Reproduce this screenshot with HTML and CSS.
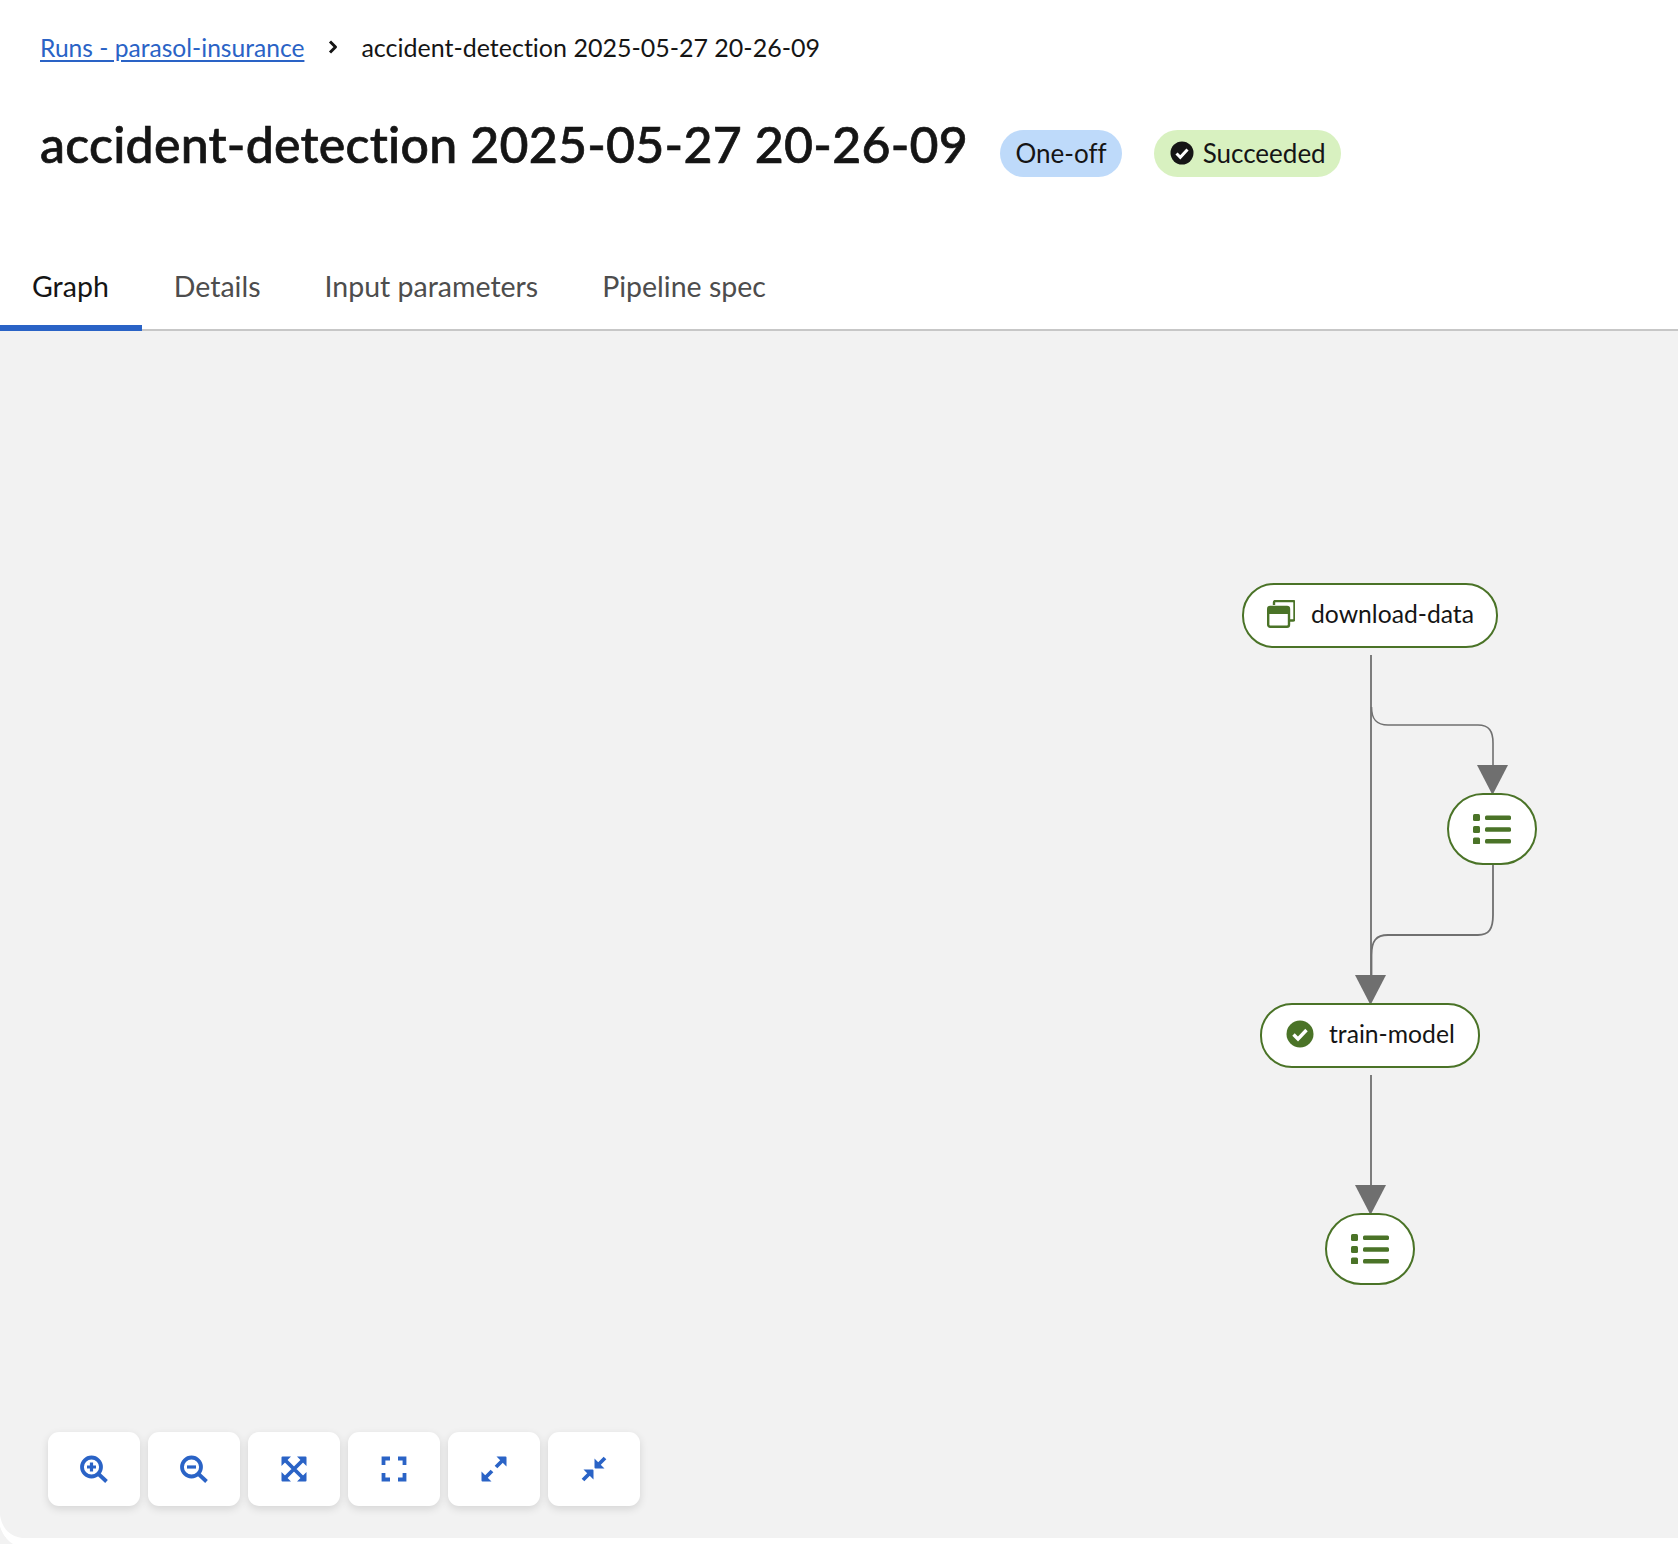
FILE: index.html
```html
<!DOCTYPE html>
<html lang="en">
<head>
<meta charset="utf-8">
<title>accident-detection 2025-05-27 20-26-09</title>
<link rel="stylesheet" href="styles.css">
</head>
<body>
<main class="page">
  <nav class="breadcrumb">
    <a class="crumb-link" href="#">Runs - parasol-insurance</a>
    <svg class="crumb-sep" viewBox="0 0 12 16"><path d="M3 2.500 8.500 8 3 13.500" fill="none" stroke="#151515" stroke-width="3" stroke-linejoin="round"/></svg>
    <span class="crumb-current">accident-detection 2025-05-27 20-26-09</span>
  </nav>
  <header class="title-row">
    <h1 class="title">accident-detection 2025-05-27 20-26-09</h1>
    <span class="tag tag-blue">One-off</span>
    <span class="tag tag-green">
      <svg class="tag-icon" viewBox="0 0 24 24"><circle cx="12" cy="12" r="11.500" fill="#151515"/><path d="M6.500 12.500 10.300 16.300 17.500 8.500" fill="none" stroke="#fff" stroke-width="3"/></svg>
      Succeeded
    </span>
  </header>
  <div class="tabs">
    <a class="tab tab-active">Graph</a>
    <a class="tab">Details</a>
    <a class="tab">Input parameters</a>
    <a class="tab">Pipeline spec</a>
  </div>
  <section class="canvas">
    <svg class="edges" viewBox="0 331 1678 1207">
      <path class="edge" d="M1371 655V978"/>
      <path class="edge edge-thin" d="M1371.500 707C1371.500 719 1376 725 1388 725H1478C1489 725 1493 731 1493 743V768"/>
      <path class="edge" d="M1493 865V915C1493 929 1489 935 1478 935H1388C1376 935 1371.500 941 1371.500 955V978"/>
      <path class="edge" d="M1371 1075V1188"/>
      <path class="arrow" d="M1477 765H1508L1492.500 795Z"/>
      <path class="arrow" d="M1355 975H1386L1370.500 1005Z"/>
      <path class="arrow" d="M1355 1185H1386L1370.500 1215Z"/>
    </svg>

    <div class="node node-download">
      <svg class="node-icon-stack" viewBox="0 0 28 28">
        <path d="M7 5V2.500A1.500 1.500 0 0 1 8.500 1H26a1.500 1.500 0 0 1 1.500 1.500V19a1.500 1.500 0 0 1-1.500 1.500h-3" fill="none" stroke="#4a7327" stroke-width="2.400"/>
        <rect x="1.200" y="7" width="20.800" height="19.800" rx="2" fill="#fff" stroke="#4a7327" stroke-width="2.400"/>
        <path d="M1 9a2 2 0 0 1 2-2h17a2 2 0 0 1 2 2v5H1Z" fill="#4a7327"/>
      </svg>
      <span class="node-label">download-data</span>
    </div>

    <div class="node node-list node-list-a">
      <svg class="list-icon" viewBox="0 0 38 30">
        <rect x="0" y="0" width="7" height="7" rx="1.500"/><rect x="12" y="1.500" width="26" height="4.400" rx="1.500"/>
        <rect x="0" y="12" width="7" height="7" rx="1.500"/><rect x="12" y="13.300" width="26" height="4.400" rx="1.500"/>
        <rect x="0" y="23.500" width="7" height="7" rx="1.500"/><rect x="12" y="25" width="26" height="4.400" rx="1.500"/>
      </svg>
    </div>

    <div class="node node-train">
      <svg class="node-icon-check" viewBox="0 0 28 28"><circle cx="14" cy="14" r="13.500" fill="#4a7327"/><path d="M7.500 14.500 12 19 20.500 10" fill="none" stroke="#fff" stroke-width="3.400"/></svg>
      <span class="node-label">train-model</span>
    </div>

    <div class="node node-list node-list-b">
      <svg class="list-icon" viewBox="0 0 38 30">
        <rect x="0" y="0" width="7" height="7" rx="1.500"/><rect x="12" y="1.500" width="26" height="4.400" rx="1.500"/>
        <rect x="0" y="12" width="7" height="7" rx="1.500"/><rect x="12" y="13.300" width="26" height="4.400" rx="1.500"/>
        <rect x="0" y="23.500" width="7" height="7" rx="1.500"/><rect x="12" y="25" width="26" height="4.400" rx="1.500"/>
      </svg>
    </div>

    <div class="controls">
      <button class="ctl" aria-label="Zoom in"><svg viewBox="0 0 28 28"><circle cx="11.500" cy="12" r="9.500"/><path d="M18.500 19 26.500 26.500"/><path class="thin" d="M7 12H16M11.500 7.500V16.500"/></svg></button>
      <button class="ctl" aria-label="Zoom out"><svg viewBox="0 0 28 28"><circle cx="11.500" cy="12" r="9.500"/><path d="M18.500 19 26.500 26.500"/><path class="thin" d="M7 12H16"/></svg></button>
      <button class="ctl" aria-label="Fit to screen"><svg viewBox="0 0 28 28"><path d="M5 5 23 23M23 5 5 23"/><path class="solid" d="M1.500 11V2.500a1 1 0 0 1 1-1H11ZM17 1.500h8.500a1 1 0 0 1 1 1V11ZM26.500 17v8.500a1 1 0 0 1-1 1H17ZM11 26.500H2.500a1 1 0 0 1-1-1V17Z"/></svg></button>
      <button class="ctl" aria-label="Reset view"><svg viewBox="0 0 28 28"><path d="M10 3.500H3.500V10M18 3.500H24.500V10M10 24.500H3.500V18M18 24.500H24.500V18"/></svg></button>
      <button class="ctl" aria-label="Expand"><svg viewBox="0 0 28 28"><path d="M6 22 12 16M16 12 22 6"/><path class="solid" d="M16.500 1.500h9a1 1 0 0 1 1 1V11.500ZM11.500 26.500H2.500a1 1 0 0 1-1-1V16.500Z"/></svg></button>
      <button class="ctl" aria-label="Collapse"><svg viewBox="0 0 28 28"><path d="M3 25 9 19M19 9 25 3"/><path class="solid" d="M14.500 3.500 24.500 13.500H15.500a1 1 0 0 1-1-1ZM3.500 14.500H12.500a1 1 0 0 1 1 1V24.500Z"/></svg></button>
    </div>

    <svg class="corner" viewBox="0 0 24 30">
      <path class="corner-white" d="M0 1C2 14 9 22 22 24L24 30H13C7 26 2 20 0 13Z"/>
      <path class="corner-gray" d="M0 13C2 20 7 26 13 30H0Z"/>
    </svg>
  </section>
</main>
</body>
</html>
```

FILE: styles.css
```css
* { box-sizing: border-box; }
html, body { margin: 0; height: 100%; background: #fff; }
body { font-family: "Lato", "Liberation Sans", sans-serif; color: #151515; overflow: hidden; font-variant-ligatures: none; }

.page { height: 1544px; padding-bottom: 6px; display: flex; flex-direction: column; }

.breadcrumb { display: flex; align-items: center; height: 94px; padding: 0 40px; font-size: 25px; }
.crumb-link { color: #2a63c6; font-size: 24.6px; text-decoration: underline; text-decoration-thickness: 2px; text-underline-offset: 3px; }
.crumb-sep { width: 12px; height: 16px; margin: 0 22px 0 23px; }

.title-row { display: flex; align-items: center; height: 106px; padding: 0 40px; margin-top: 6px; }
.title { margin: 0; font-size: 50px; line-height: 60px; font-weight: 500; letter-spacing: .25px; position: relative; top: -9px; -webkit-text-stroke: 0.7px #151515; }
.tag { display: inline-flex; align-items: center; height: 47px; border-radius: 24px; padding: 0 15.500px; font-size: 26px; }
.tag-blue { margin-left: 32px; background: #bedafa; }
.tag-green { margin-left: 32px; background: #d8f1c0; }
.tag-icon { width: 24px; height: 24px; margin-right: 9px; }

.tabs { display: flex; align-items: flex-end; border-bottom: 2px solid #c7c7c7; height: 125px; }
.tab { position: relative; padding: 0 32px; height: 85px; line-height: 84px; font-size: 28.5px; color: #4d4d4d; }
.tab-active { color: #151515; padding-right: 33px; }
.tab-active::after { content: ""; position: absolute; left: 0; right: 0; bottom: -2px; height: 6px; background: #2a63c6; }

.canvas { position: relative; flex: 1; background: #f2f2f2; }
.edges { position: absolute; left: 0; top: 0; width: 1678px; height: 1207px; }
.edge { fill: none; stroke: #707070; stroke-width: 1.8; }
.edge-thin { stroke-width: 1.6; }
.arrow { fill: #6f6f6f; }

.node { position: absolute; display: flex; align-items: center; height: 65px; background: #fff; border: 2px solid #4a7327; border-radius: 32px; font-size: 24.7px; color: #151515; }
.node-label { margin-bottom: 4px; }
.node-download { left: 1242px; top: 252px; width: 256px; padding-left: 23px; }
.node-train { left: 1260px; top: 672px; width: 220px; padding-left: 24px; }
.node-list { width: 90px; height: 72px; border-radius: 36px; justify-content: center; }
.node-list-a { left: 1447px; top: 462px; }
.node-list-b { left: 1325px; top: 882px; }

.node-icon-stack { width: 28px; height: 28px; margin-right: 16px; margin-bottom: 3px; }
.node-icon-check { width: 28px; height: 28px; margin-right: 15px; margin-bottom: 3px; }
.list-icon { width: 38px; height: 30px; fill: #4a7327; }

.controls { position: absolute; left: 48px; bottom: 32px; display: flex; gap: 8px; }
.ctl { width: 92px; height: 74px; padding: 0; border: 0; border-radius: 11px; background: #fff; box-shadow: 0 3px 8px rgba(0,0,0,.12); display: flex; align-items: center; justify-content: center; }
.ctl svg { width: 28px; height: 28px; fill: none; stroke: #2a63c6; stroke-width: 3.800; }
.ctl svg .thin { stroke-width: 3.200; }
.ctl svg .solid { fill: #2a63c6; stroke: none; }

.corner { position: absolute; left: 0; bottom: -6px; width: 24px; height: 30px; }
.corner-white { fill: #fff; }
.corner-gray { fill: #f2f2f2; }
```
